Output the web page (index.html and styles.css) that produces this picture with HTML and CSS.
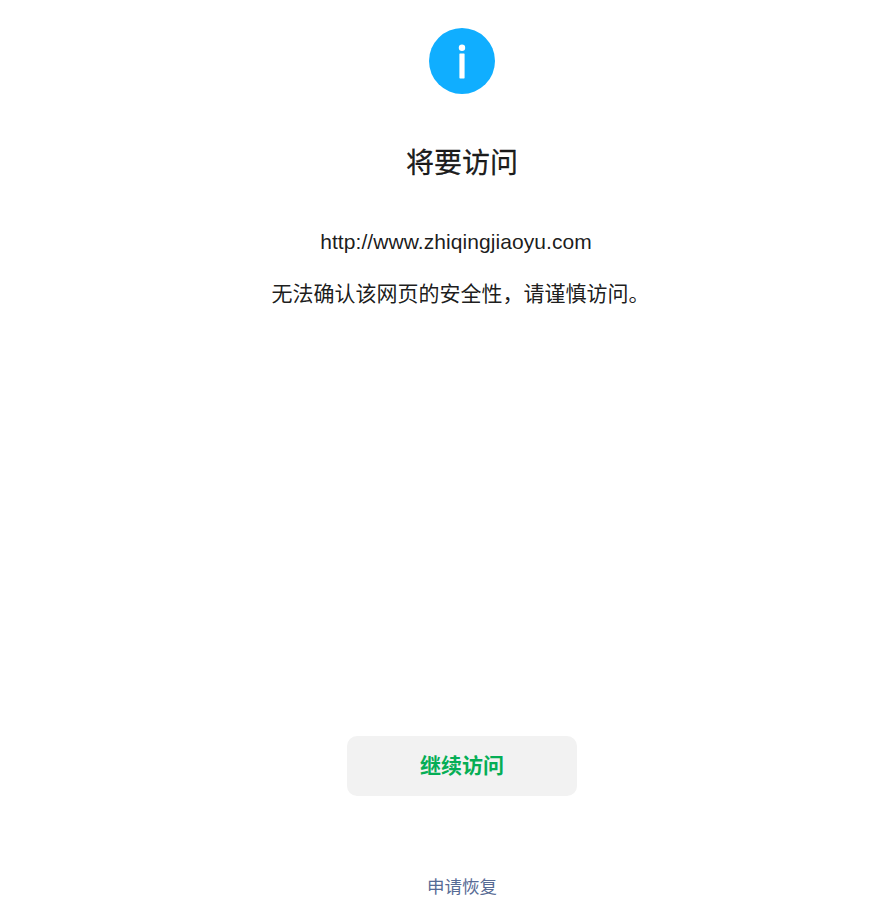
FILE: index.html
```html
<!DOCTYPE html>
<html lang="zh-CN">
<head>
<meta charset="utf-8">
<title>将要访问</title>
<link rel="stylesheet" href="styles.css">
</head>
<body>
<main class="page">
  <section class="top">
    <svg class="icon" width="66" height="66" viewBox="0 0 66 66" aria-hidden="true">
      <circle cx="33" cy="33" r="33" fill="#10aeff"/>
      <circle cx="33" cy="19.8" r="3.2" fill="#fff"/>
      <rect x="30.4" y="25.4" width="5.2" height="25" rx="0.6" fill="#fff"/>
    </svg>
    <h1 class="title">将要访问</h1>
    <p class="url">http://www.zhiqingjiaoyu.com</p>
    <p class="desc">无法确认该网页的安全性，请谨慎访问。</p>
  </section>
  <section class="bottom">
    <a class="btn">继续访问</a>
    <a class="link">申请恢复</a>
  </section>
</main>
</body>
</html>
```
FILE: styles.css
```css
* { box-sizing: border-box; }
html, body { margin: 0; height: 100%; background: #fff; }
body { font-family: "Liberation Sans", "Noto Sans CJK SC", sans-serif; color: rgba(0,0,0,.9); }
.page { height: 916px; padding: 28px 0 0 35px; display: flex; flex-direction: column; align-items: center; justify-content: space-between; }
.top { display: flex; flex-direction: column; align-items: center; }
.icon { display: block; }
.title { margin: 50px 0 0; font-size: 28px; line-height: 40px; font-weight: 400; -webkit-text-stroke: .3px currentColor; }
.url { margin: 44px 12px 0 0; font-size: 21px; line-height: 28px; letter-spacing: .07px; }
.desc { margin: 23px 3px 0 0; font-size: 21px; line-height: 30px; }
.bottom { display: flex; flex-direction: column; align-items: center; }
.btn { width: 230px; height: 60px; padding-bottom: 5px; border-radius: 10px; background: #f2f2f2; color: #06ae56; font-size: 21px; font-weight: 700; display: flex; align-items: center; justify-content: center; }
.link { margin-top: 79px; margin-bottom: 17px; font-size: 17.5px; line-height: 24px; color: #576b95; }
```
